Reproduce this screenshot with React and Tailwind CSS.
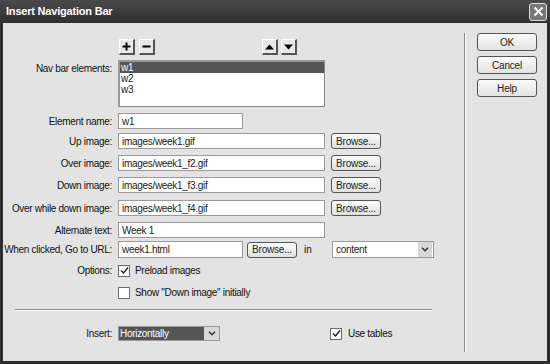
import React from "react";

const font = { fontFamily: '"Liberation Sans", Arial, sans-serif' };

const Field = ({ value, w = "w-[207px]" }) => (
  <div className={`${w} h-full bg-white border border-[#9a9a9a] flex items-center px-[3px] text-[10px] tracking-[-0.3px] text-[#222]`}>
    {value}
  </div>
);

const Browse = ({ className = "" }) => (
  <div className={`w-[50px] h-[16px] rounded-[3px] border border-[#555] bg-gradient-to-b from-[#fbfbfb] to-[#e0e0e0] flex items-center justify-center text-[10px] tracking-[-0.2px] text-[#222] ${className}`}>
    Browse...
  </div>
);

const Row = ({ label, children, className = "h-[16px]" }) => (
  <div className={`flex items-center ${className}`}>
    <div className="w-[115px] pr-[6px] text-right text-[10px] tracking-[-0.3px] text-[#111] whitespace-nowrap">{label}</div>
    <div className="flex items-center h-full gap-[6px]">{children}</div>
  </div>
);

const Square = ({ children }) => (
  <div className="w-[16px] h-[16px] bg-[#e8e8e8] border-t border-l border-white border-r-2 border-b-2 border-r-[#555] border-b-[#555] flex items-center justify-center">
    {children}
  </div>
);

const Check = ({ checked }) => (
  <div className="w-[12px] h-[12px] bg-white border border-[#6a6a6a] flex items-center justify-center">
    {checked && (
      <svg width="9" height="9" viewBox="0 0 9 9">
        <path d="M1 4.5 L3.5 7 L8 1.5" stroke="#222" strokeWidth="1.5" fill="none" />
      </svg>
    )}
  </div>
);

const Chevron = () => (
  <svg width="8" height="5" viewBox="0 0 8 5">
    <path d="M1 0.8 L4 3.8 L7 0.8" stroke="#333" strokeWidth="1.5" fill="none" />
  </svg>
);

const DlgButton = ({ label }) => (
  <div className="w-[60px] h-[18px] rounded-[3px] border border-[#555] bg-gradient-to-b from-[#fcfcfc] to-[#e2e2e2] flex items-center justify-center text-[10px] tracking-[-0.2px] text-[#222]">
    {label}
  </div>
);

export default function App() {
  return (
    <div className="w-[550px] h-[364px] bg-[#2e2e2e] flex flex-col overflow-hidden" style={font}>
      <div className="h-[23px] flex items-center justify-between pl-[6px] pr-[3px] bg-gradient-to-b from-[#4a4a4a] to-[#2f2f2f]">
        <span className="text-white font-bold text-[11px] tracking-[-0.2px]">Insert Navigation Bar</span>
        <div className="w-[18px] h-[18px] rounded-[3px] border border-[#ddd] bg-[#777] flex items-center justify-center">
          <svg width="11" height="11" viewBox="0 0 11 11">
            <path d="M1.5 1.5 L9.5 9.5 M9.5 1.5 L1.5 9.5" stroke="white" strokeWidth="2" />
          </svg>
        </div>
      </div>

      <div className="flex-1 mx-[3px] mb-[3px] bg-[#e3e3e3] flex">
        <div className="w-[461px] flex flex-col pt-[16px]">
          <div className="flex h-[16px] items-center pl-[116px]">
            <Square>
              <svg width="9" height="9" viewBox="0 0 9 9"><path d="M4.5 0.5 V8.5 M0.5 4.5 H8.5" stroke="#000" strokeWidth="2" /></svg>
            </Square>
            <div className="ml-[4px]">
              <Square>
                <svg width="9" height="9" viewBox="0 0 9 9"><path d="M0.5 4.5 H8.5" stroke="#000" strokeWidth="2" /></svg>
              </Square>
            </div>
            <div className="ml-[107px]">
              <Square>
                <svg width="9" height="6" viewBox="0 0 9 6"><path d="M0 5.5 L4.5 0.5 L9 5.5 Z" fill="#000" /></svg>
              </Square>
            </div>
            <div className="ml-[3px]">
              <Square>
                <svg width="9" height="6" viewBox="0 0 9 6"><path d="M0 0.5 L4.5 5.5 L9 0.5 Z" fill="#000" /></svg>
              </Square>
            </div>
          </div>

          <div className="flex mt-[5px] h-[47px]">
            <div className="w-[115px] pr-[6px] pt-[1px] text-right text-[10px] tracking-[-0.3px] text-[#111]">Nav bar elements:</div>
            <div className="w-[207px] h-full bg-white border border-[#888] border-t-2 border-l-2 border-t-[#999] border-l-[#999] text-[10px] tracking-[-0.3px] text-[#222] leading-[11px]">
              <div className="bg-[#555] text-white px-[1px] h-[11px]">w1</div>
              <div className="px-[1px]">w2</div>
              <div className="px-[1px]">w3</div>
            </div>
          </div>

          <div className="mt-[6px]">
            <Row label="Element name:"><Field value="w1" w="w-[125px]" /></Row>
          </div>
          <div className="mt-[4px]">
            <Row label="Up image:"><Field value="images/week1.gif" /><Browse /></Row>
          </div>
          <div className="mt-[6px]">
            <Row label="Over image:"><Field value="images/week1_f2.gif" /><Browse /></Row>
          </div>
          <div className="mt-[6px]">
            <Row label="Down image:"><Field value="images/week1_f3.gif" /><Browse /></Row>
          </div>
          <div className="mt-[7px]">
            <Row label="Over while down image:"><Field value="images/week1_f4.gif" /><Browse /></Row>
          </div>
          <div className="mt-[6px]">
            <Row label="Alternate text:"><Field value="Week 1" /></Row>
          </div>
          <div className="mt-[3px]">
            <Row label="When clicked, Go to URL:" className="h-[17px]">
              <Field value="week1.html" w="w-[125px]" />
              <Browse className="-ml-[2px]" />
              <span className="text-[10px] text-[#111] ml-[1px] w-[22px]">in</span>
              <div className="w-[102px] h-[17px] bg-white border border-[#9a9a9a] flex items-center">
                <span className="flex-1 px-[3px] text-[10px] tracking-[-0.3px] text-[#222]">content</span>
                <div className="w-[14px] h-[15px] mr-[1px] bg-[#d8d8d8] flex items-center justify-center"><Chevron /></div>
              </div>
            </Row>
          </div>
          <div className="mt-[6px]">
            <Row label="Options:" className="h-[13px]">
              <Check checked />
              <span className="text-[10px] tracking-[-0.3px] text-[#111] -ml-[1px]">Preload images</span>
            </Row>
          </div>
          <div className="mt-[9px]">
            <Row label="" className="h-[13px]">
              <Check />
              <span className="text-[10px] tracking-[-0.3px] text-[#111] -ml-[1px]">Show "Down image" initially</span>
            </Row>
          </div>

          <div className="mt-[10px] ml-[12px] w-[417px] border-t border-[#8a8a8a] border-b border-b-white" />

          <div className="mt-[15px]">
            <Row label="Insert:" className="h-[15px]">
              <div className="w-[102px] h-[15px] bg-white border border-[#9a9a9a] flex items-center">
                <span className="flex-1 h-full bg-[#555] text-white text-[10px] tracking-[-0.3px] px-[1px] leading-[13px]">Horizontally</span>
                <div className="w-[15px] h-full bg-[#d8d8d8] flex items-center justify-center"><Chevron /></div>
              </div>
              <div className="ml-[104px] flex items-center gap-[6px]">
                <Check checked />
                <span className="text-[10px] tracking-[-0.3px] text-[#111]">Use tables</span>
              </div>
            </Row>
          </div>
        </div>

        <div className="mt-[10px] mb-[9px] border-l border-[#8a8a8a] border-r border-r-white" />

        <div className="flex-1 flex flex-col gap-[5px] pt-[10px] pl-[11px]">
          <DlgButton label="OK" />
          <DlgButton label="Cancel" />
          <DlgButton label="Help" />
        </div>
      </div>
    </div>
  );
}
